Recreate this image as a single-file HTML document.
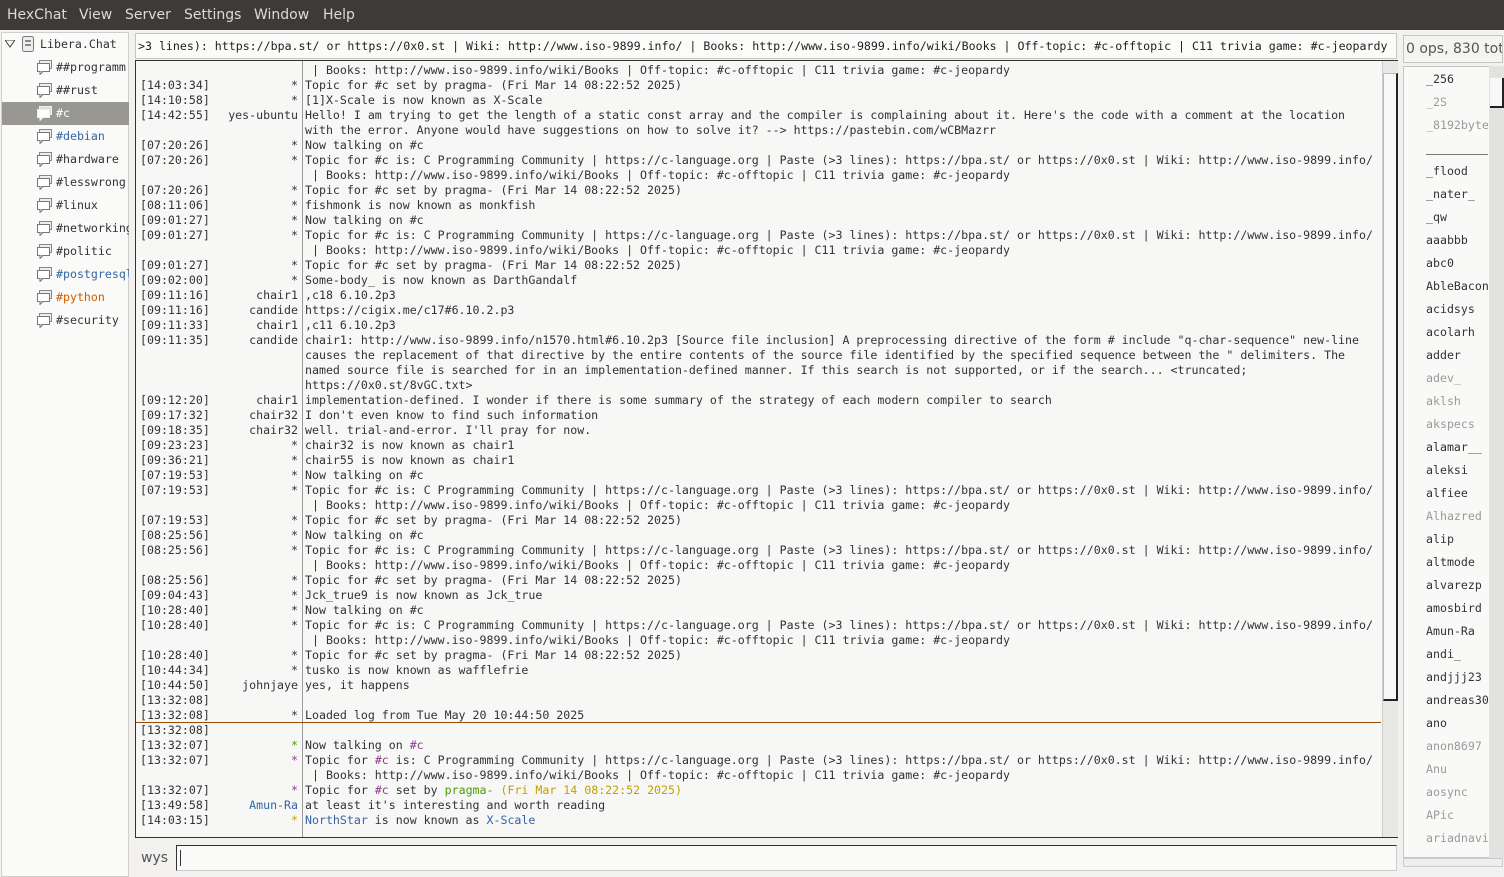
<!DOCTYPE html>
<html><head><meta charset="utf-8"><style>
*{margin:0;padding:0;box-sizing:border-box}
body{width:1504px;height:877px;background:#f2f1f0;position:relative;overflow:hidden;font-family:"DejaVu Sans Mono","Liberation Mono",monospace;color:#2e3436}
#mb{position:absolute;left:0;top:0;width:1504px;height:30px;background:#3c3b37;color:#dfdbd2;font-family:"DejaVu Sans","Liberation Sans",sans-serif;font-size:14px}
#mb span{position:absolute;top:7px}
#tree{position:absolute;left:1px;top:32px;width:128px;height:845px;background:#fafaf9;border:1px solid #d0cfcc;font-size:11.6px}
.ti{position:absolute;left:0;width:127px;height:23px;line-height:23px;white-space:nowrap;overflow:hidden}
.ti .ic{position:absolute;left:35px;top:4px;width:16px;height:15px}
.ti .t{position:absolute;left:54px}
#topic{position:absolute;left:135px;top:33px;width:1262px;height:26px;background:#fbfbfa;border:1px solid #c6c5c2;font-size:11.6px;line-height:24px;padding-left:2px;white-space:nowrap;overflow:hidden;color:#1e1e1e}
#chat{position:absolute;left:135px;top:60px;width:1263px;height:778px;background:#f7f7f6;border:1px solid #333;border-right:none;overflow:hidden}
#sep{position:absolute;left:166px;top:0;width:1px;height:778px;background:#9a9a9a}
.r{position:absolute;left:0;height:15px;font-size:11.6px;line-height:15px;white-space:pre;color:#2e3436}
.r b{font-weight:normal;position:absolute;left:4px}
.r i{font-style:normal;position:absolute;right:-162px;width:0;text-align:right;direction:rtl}
.r span{position:absolute;left:169px}
#hr{position:absolute;left:0;top:661px;width:1245px;height:1px;background:#9c4a00}
#sb{position:absolute;left:1246px;top:0;width:16px;height:778px;background:#e8e8e7;border-left:1px solid #ccc}
#thumb{position:absolute;left:1247px;top:12px;width:15px;height:628px;background:#f8f8f8;border:1px solid #bbb;border-right:2px solid #222;border-bottom:2px solid #222}
#ul{position:absolute;left:1403px;top:35px;width:100px;height:28px;background:#f4f4f3;border:1px solid #c6c5c2;font-family:"DejaVu Sans","Liberation Sans",sans-serif;font-size:14px;line-height:26px;color:#555;white-space:nowrap;overflow:hidden;padding-left:2px}
#ulist{position:absolute;left:1403px;top:66px;width:101px;height:792px;background:#f9f9f8;border:1px solid #c6c5c2;overflow:hidden;font-size:11.6px}
.u{position:absolute;left:22px;height:23px;line-height:23px;white-space:nowrap}
.g{color:#9a9a9a}
#usb{position:absolute;left:1489px;top:66px;width:15px;height:792px;background:#e2e2e1}
#inp{position:absolute;left:176px;top:845px;width:1221px;height:26px;background:#fafaf9;border:1px solid #333;border-right:1px solid #ccc;border-bottom:1px solid #ccc}
#wys{position:absolute;left:141px;top:850px;font-family:"DejaVu Sans","Liberation Sans",sans-serif;font-size:14px;color:#555}
.p{color:#8a3c8f}.gr{color:#4e9a06}.y{color:#c4a000}.bl{color:#3465a4}
</style></head><body>
<div id="mb"><span style="left:7px">HexChat</span><span style="left:79px">View</span><span style="left:125px">Server</span><span style="left:184px">Settings</span><span style="left:254px">Window</span><span style="left:323px">Help</span></div>
<div id="tree">
<div class="ti" style="top:0"><svg style="position:absolute;left:3px;top:7px" width="10" height="8"><path d="M0 0H10L5 7Z" fill="none" stroke="#444"/></svg><svg style="position:absolute;left:20px;top:3px" width="12" height="16"><rect x="0.5" y="0.5" width="11" height="15" rx="2" fill="#eee" stroke="#777"/><rect x="3" y="4" width="6" height="2" fill="#888"/><rect x="3" y="8" width="6" height="2" fill="#888"/></svg><span class="t" style="left:38px">Libera.Chat</span></div>
<div class="ti" style="top:23px"><svg class="ic"><rect x="2.5" y=".5" width="12" height="8" fill="#eee" stroke="#888"/><rect x=".5" y="3.5" width="12" height="8" fill="#fff" stroke="#777"/><path d="M3 11.5v3l3-3" fill="#fff" stroke="#777"/></svg><span class="t">##programm</span></div>
<div class="ti" style="top:46px"><svg class="ic"><rect x="2.5" y=".5" width="12" height="8" fill="#eee" stroke="#888"/><rect x=".5" y="3.5" width="12" height="8" fill="#fff" stroke="#777"/><path d="M3 11.5v3l3-3" fill="#fff" stroke="#777"/></svg><span class="t">##rust</span></div>
<div class="ti" style="top:69px;background:#989792;color:#fff"><svg class="ic"><rect x="2.5" y=".5" width="12" height="8" fill="#ddd" stroke="#eee"/><rect x=".5" y="3.5" width="12" height="8" fill="#fff" stroke="#eee"/><path d="M3 11.5v3l3-3" fill="#fff" stroke="#eee"/></svg><span class="t">#c</span></div>
<div class="ti" style="top:92px"><svg class="ic"><rect x="2.5" y=".5" width="12" height="8" fill="#eee" stroke="#888"/><rect x=".5" y="3.5" width="12" height="8" fill="#fff" stroke="#777"/><path d="M3 11.5v3l3-3" fill="#fff" stroke="#777"/></svg><span class="t" style="color:#3465a4">#debian</span></div>
<div class="ti" style="top:115px"><svg class="ic"><rect x="2.5" y=".5" width="12" height="8" fill="#eee" stroke="#888"/><rect x=".5" y="3.5" width="12" height="8" fill="#fff" stroke="#777"/><path d="M3 11.5v3l3-3" fill="#fff" stroke="#777"/></svg><span class="t">#hardware</span></div>
<div class="ti" style="top:138px"><svg class="ic"><rect x="2.5" y=".5" width="12" height="8" fill="#eee" stroke="#888"/><rect x=".5" y="3.5" width="12" height="8" fill="#fff" stroke="#777"/><path d="M3 11.5v3l3-3" fill="#fff" stroke="#777"/></svg><span class="t">#lesswrong</span></div>
<div class="ti" style="top:161px"><svg class="ic"><rect x="2.5" y=".5" width="12" height="8" fill="#eee" stroke="#888"/><rect x=".5" y="3.5" width="12" height="8" fill="#fff" stroke="#777"/><path d="M3 11.5v3l3-3" fill="#fff" stroke="#777"/></svg><span class="t">#linux</span></div>
<div class="ti" style="top:184px"><svg class="ic"><rect x="2.5" y=".5" width="12" height="8" fill="#eee" stroke="#888"/><rect x=".5" y="3.5" width="12" height="8" fill="#fff" stroke="#777"/><path d="M3 11.5v3l3-3" fill="#fff" stroke="#777"/></svg><span class="t">#networking</span></div>
<div class="ti" style="top:207px"><svg class="ic"><rect x="2.5" y=".5" width="12" height="8" fill="#eee" stroke="#888"/><rect x=".5" y="3.5" width="12" height="8" fill="#fff" stroke="#777"/><path d="M3 11.5v3l3-3" fill="#fff" stroke="#777"/></svg><span class="t">#politic</span></div>
<div class="ti" style="top:230px"><svg class="ic"><rect x="2.5" y=".5" width="12" height="8" fill="#eee" stroke="#888"/><rect x=".5" y="3.5" width="12" height="8" fill="#fff" stroke="#777"/><path d="M3 11.5v3l3-3" fill="#fff" stroke="#777"/></svg><span class="t" style="color:#3465a4">#postgresql</span></div>
<div class="ti" style="top:253px"><svg class="ic"><rect x="2.5" y=".5" width="12" height="8" fill="#eee" stroke="#888"/><rect x=".5" y="3.5" width="12" height="8" fill="#fff" stroke="#777"/><path d="M3 11.5v3l3-3" fill="#fff" stroke="#777"/></svg><span class="t" style="color:#ce5c00">#python</span></div>
<div class="ti" style="top:276px"><svg class="ic"><rect x="2.5" y=".5" width="12" height="8" fill="#eee" stroke="#888"/><rect x=".5" y="3.5" width="12" height="8" fill="#fff" stroke="#777"/><path d="M3 11.5v3l3-3" fill="#fff" stroke="#777"/></svg><span class="t">#security</span></div>
</div>
<div id="topic">&gt;3 lines): https://bpa.st/ or https://0x0.st | Wiki: http://www.iso-9899.info/ | Books: http://www.iso-9899.info/wiki/Books | Off-topic: #c-offtopic | C11 trivia game: #c-jeopardy</div>
<div id="chat">
<div id="sep"></div>
<div class="r" style="top:2px"><span> | Books: http://www.iso-9899.info/wiki/Books | Off-topic: #c-offtopic | C11 trivia game: #c-jeopardy</span></div>
<div class="r" style="top:17px"><b>[14:03:34]</b><i>*</i><span>Topic for #c set by pragma- (Fri Mar 14 08:22:52 2025)</span></div>
<div class="r" style="top:32px"><b>[14:10:58]</b><i>*</i><span>[1]X-Scale is now known as X-Scale</span></div>
<div class="r" style="top:47px"><b>[14:42:55]</b><i>yes-ubuntu</i><span>Hello! I am trying to get the length of a static const array and the compiler is complaining about it. Here's the code with a comment at the location</span></div>
<div class="r" style="top:62px"><span>with the error. Anyone would have suggestions on how to solve it? --&gt; https://pastebin.com/wCBMazrr</span></div>
<div class="r" style="top:77px"><b>[07:20:26]</b><i>*</i><span>Now talking on #c</span></div>
<div class="r" style="top:92px"><b>[07:20:26]</b><i>*</i><span>Topic for #c is: C Programming Community | https://c-language.org | Paste (&gt;3 lines): https://bpa.st/ or https://0x0.st | Wiki: http://www.iso-9899.info/</span></div>
<div class="r" style="top:107px"><span> | Books: http://www.iso-9899.info/wiki/Books | Off-topic: #c-offtopic | C11 trivia game: #c-jeopardy</span></div>
<div class="r" style="top:122px"><b>[07:20:26]</b><i>*</i><span>Topic for #c set by pragma- (Fri Mar 14 08:22:52 2025)</span></div>
<div class="r" style="top:137px"><b>[08:11:06]</b><i>*</i><span>fishmonk is now known as monkfish</span></div>
<div class="r" style="top:152px"><b>[09:01:27]</b><i>*</i><span>Now talking on #c</span></div>
<div class="r" style="top:167px"><b>[09:01:27]</b><i>*</i><span>Topic for #c is: C Programming Community | https://c-language.org | Paste (&gt;3 lines): https://bpa.st/ or https://0x0.st | Wiki: http://www.iso-9899.info/</span></div>
<div class="r" style="top:182px"><span> | Books: http://www.iso-9899.info/wiki/Books | Off-topic: #c-offtopic | C11 trivia game: #c-jeopardy</span></div>
<div class="r" style="top:197px"><b>[09:01:27]</b><i>*</i><span>Topic for #c set by pragma- (Fri Mar 14 08:22:52 2025)</span></div>
<div class="r" style="top:212px"><b>[09:02:00]</b><i>*</i><span>Some-body_ is now known as DarthGandalf</span></div>
<div class="r" style="top:227px"><b>[09:11:16]</b><i>chair1</i><span>,c18 6.10.2p3</span></div>
<div class="r" style="top:242px"><b>[09:11:16]</b><i>candide</i><span>https://cigix.me/c17#6.10.2.p3</span></div>
<div class="r" style="top:257px"><b>[09:11:33]</b><i>chair1</i><span>,c11 6.10.2p3</span></div>
<div class="r" style="top:272px"><b>[09:11:35]</b><i>candide</i><span>chair1: http://www.iso-9899.info/n1570.html#6.10.2p3 [Source file inclusion] A preprocessing directive of the form # include "q-char-sequence" new-line</span></div>
<div class="r" style="top:287px"><span>causes the replacement of that directive by the entire contents of the source file identified by the specified sequence between the " delimiters. The</span></div>
<div class="r" style="top:302px"><span>named source file is searched for in an implementation-defined manner. If this search is not supported, or if the search... &lt;truncated;</span></div>
<div class="r" style="top:317px"><span>https://0x0.st/8vGC.txt&gt;</span></div>
<div class="r" style="top:332px"><b>[09:12:20]</b><i>chair1</i><span>implementation-defined. I wonder if there is some summary of the strategy of each modern compiler to search</span></div>
<div class="r" style="top:347px"><b>[09:17:32]</b><i>chair32</i><span>I don't even know to find such information</span></div>
<div class="r" style="top:362px"><b>[09:18:35]</b><i>chair32</i><span>well. trial-and-error. I'll pray for now.</span></div>
<div class="r" style="top:377px"><b>[09:23:23]</b><i>*</i><span>chair32 is now known as chair1</span></div>
<div class="r" style="top:392px"><b>[09:36:21]</b><i>*</i><span>chair55 is now known as chair1</span></div>
<div class="r" style="top:407px"><b>[07:19:53]</b><i>*</i><span>Now talking on #c</span></div>
<div class="r" style="top:422px"><b>[07:19:53]</b><i>*</i><span>Topic for #c is: C Programming Community | https://c-language.org | Paste (&gt;3 lines): https://bpa.st/ or https://0x0.st | Wiki: http://www.iso-9899.info/</span></div>
<div class="r" style="top:437px"><span> | Books: http://www.iso-9899.info/wiki/Books | Off-topic: #c-offtopic | C11 trivia game: #c-jeopardy</span></div>
<div class="r" style="top:452px"><b>[07:19:53]</b><i>*</i><span>Topic for #c set by pragma- (Fri Mar 14 08:22:52 2025)</span></div>
<div class="r" style="top:467px"><b>[08:25:56]</b><i>*</i><span>Now talking on #c</span></div>
<div class="r" style="top:482px"><b>[08:25:56]</b><i>*</i><span>Topic for #c is: C Programming Community | https://c-language.org | Paste (&gt;3 lines): https://bpa.st/ or https://0x0.st | Wiki: http://www.iso-9899.info/</span></div>
<div class="r" style="top:497px"><span> | Books: http://www.iso-9899.info/wiki/Books | Off-topic: #c-offtopic | C11 trivia game: #c-jeopardy</span></div>
<div class="r" style="top:512px"><b>[08:25:56]</b><i>*</i><span>Topic for #c set by pragma- (Fri Mar 14 08:22:52 2025)</span></div>
<div class="r" style="top:527px"><b>[09:04:43]</b><i>*</i><span>Jck_true9 is now known as Jck_true</span></div>
<div class="r" style="top:542px"><b>[10:28:40]</b><i>*</i><span>Now talking on #c</span></div>
<div class="r" style="top:557px"><b>[10:28:40]</b><i>*</i><span>Topic for #c is: C Programming Community | https://c-language.org | Paste (&gt;3 lines): https://bpa.st/ or https://0x0.st | Wiki: http://www.iso-9899.info/</span></div>
<div class="r" style="top:572px"><span> | Books: http://www.iso-9899.info/wiki/Books | Off-topic: #c-offtopic | C11 trivia game: #c-jeopardy</span></div>
<div class="r" style="top:587px"><b>[10:28:40]</b><i>*</i><span>Topic for #c set by pragma- (Fri Mar 14 08:22:52 2025)</span></div>
<div class="r" style="top:602px"><b>[10:44:34]</b><i>*</i><span>tusko is now known as wafflefrie</span></div>
<div class="r" style="top:617px"><b>[10:44:50]</b><i>johnjaye</i><span>yes, it happens</span></div>
<div class="r" style="top:632px"><b>[13:32:08]</b></div>
<div class="r" style="top:647px"><b>[13:32:08]</b><i>*</i><span>Loaded log from Tue May 20 10:44:50 2025</span></div>
<div id="hr"></div>
<div class="r" style="top:662px"><b>[13:32:08]</b></div>
<div class="r" style="top:677px"><b>[13:32:07]</b><i class="gr">*</i><span>Now talking on <span class="p" style="position:static">#c</span></span></div>
<div class="r" style="top:692px"><b>[13:32:07]</b><i class="p">*</i><span>Topic for <span class="p" style="position:static">#c</span> is: C Programming Community | https://c-language.org | Paste (&gt;3 lines): https://bpa.st/ or https://0x0.st | Wiki: http://www.iso-9899.info/</span></div>
<div class="r" style="top:707px"><span> | Books: http://www.iso-9899.info/wiki/Books | Off-topic: #c-offtopic | C11 trivia game: #c-jeopardy</span></div>
<div class="r" style="top:722px"><b>[13:32:07]</b><i class="p">*</i><span>Topic for <span class="p" style="position:static">#c</span> set by <span class="gr" style="position:static">pragma-</span> <span class="y" style="position:static">(Fri Mar 14 08:22:52 2025)</span></span></div>
<div class="r" style="top:737px"><b>[13:49:58]</b><i class="bl">Amun-Ra</i><span>at least it's interesting and worth reading</span></div>
<div class="r" style="top:752px"><b>[14:03:15]</b><i class="y">*</i><span><span class="bl" style="position:static">NorthStar</span> is now known as <span class="bl" style="position:static">X-Scale</span></span></div>
<div id="sb"></div><div id="thumb"></div>
</div>
<div id="ul">0 ops, 830 total</div>
<div id="ulist">
<div class="u" style="top:1px">_256</div>
<div class="u g" style="top:24px">_2S</div>
<div class="u g" style="top:47px">_8192bytes</div>
<div style="position:absolute;left:22px;top:87px;width:62px;height:1px;background:#777"></div>
<div class="u" style="top:93px">_flood</div>
<div class="u" style="top:116px">_nater_</div>
<div class="u" style="top:139px">_qw</div>
<div class="u" style="top:162px">aaabbb</div>
<div class="u" style="top:185px">abc0</div>
<div class="u" style="top:208px">AbleBacon</div>
<div class="u" style="top:231px">acidsys</div>
<div class="u" style="top:254px">acolarh</div>
<div class="u" style="top:277px">adder</div>
<div class="u g" style="top:300px">adev_</div>
<div class="u g" style="top:323px">aklsh</div>
<div class="u g" style="top:346px">akspecs</div>
<div class="u" style="top:369px">alamar__</div>
<div class="u" style="top:392px">aleksi</div>
<div class="u" style="top:415px">alfiee</div>
<div class="u g" style="top:438px">Alhazred</div>
<div class="u" style="top:461px">alip</div>
<div class="u" style="top:484px">altmode</div>
<div class="u" style="top:507px">alvarezp</div>
<div class="u" style="top:530px">amosbird</div>
<div class="u" style="top:553px">Amun-Ra</div>
<div class="u" style="top:576px">andi_</div>
<div class="u" style="top:599px">andjjj23</div>
<div class="u" style="top:622px">andreas30</div>
<div class="u" style="top:645px">ano</div>
<div class="u g" style="top:668px">anon8697</div>
<div class="u g" style="top:691px">Anu</div>
<div class="u g" style="top:714px">aosync</div>
<div class="u g" style="top:737px">APic</div>
<div class="u g" style="top:760px">ariadnavi</div>
</div>
<div id="usb"><div style="position:absolute;left:1px;top:12px;width:14px;height:30px;background:#f8f8f8;border-right:2px solid #222;border-bottom:2px solid #222"></div></div>
<div style="position:absolute;left:1403px;top:858px;width:100px;height:9px;border:1px solid #ccc;background:#eee"></div>
<div id="wys">wys</div>
<div id="inp"><div style="position:absolute;left:3px;top:4px;width:1px;height:16px;background:#333"></div></div>
</body></html>
